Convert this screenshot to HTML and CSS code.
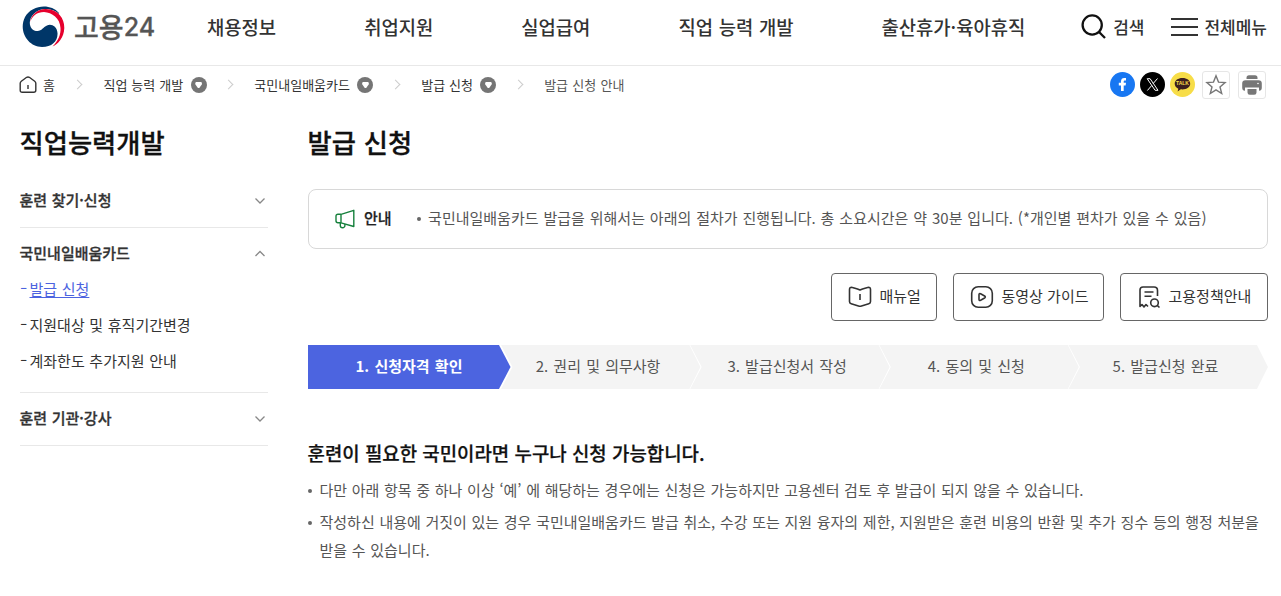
FILE: index.html
```html
<!DOCTYPE html>
<html lang="ko">
<head>
<meta charset="utf-8">
<title>고용24 - 발급 신청</title>
<link rel="stylesheet" href="styles.css">
</head>
<body>
<header class="header">
  <a class="logo">
    <svg width="43" height="42" viewBox="0 0 43 42">
      <path d="M37 7C28-3 10-1 3 11C-4 25 6 41 20 41C30 41 36 35 35.500 27C35 20 29 17.500 25 19.500C21 21 20 25 15.500 25C10 25 7 20 8 15C9 9 15 3.500 22 3C29 2.500 34 5 37 8Z" fill="#003668"/>
      <path d="M8.300 16C9 8 17 2.500 24 3C36 3.500 42.500 12 42.300 22C42 32 36 38 30.500 40.500C36 35 39 29 38.500 22C38 12 30 6.500 22 6C15 6 10 10 8.300 16Z" fill="#e6002d"/>
    </svg>
    <span class="logo-name">고용<span class="logo-num">24</span></span>
  </a>
  <nav class="gnb"><a>채용정보</a><a>취업지원</a><a>실업급여</a><a>직업 능력 개발</a><a>출산휴가·육아휴직</a></nav>
  <div class="tools">
    <a class="tool"><svg width="26" height="26" viewBox="0 0 26 26" fill="none" stroke="#111" stroke-width="2.300"><circle cx="11.200" cy="11" r="9.600"/><path d="M17.800 17.700L24 24"/></svg>검색</a>
    <a class="tool"><svg width="27" height="20" viewBox="0 0 27 20" stroke="#333" stroke-width="2"><path d="M0 2h27M0 10h27M0 18h27"/></svg>전체메뉴</a>
  </div>
</header>

<div class="pathbar">
  <div class="crumbs">
    <svg width="18" height="18" viewBox="0 0 18 18" fill="none" stroke="#333" stroke-width="1.400" stroke-linejoin="round"><path d="M1.200 7.300Q1.200 6 2.300 5.200L7.700 1.300Q9 .6 10.300 1.300L15.700 5.200Q16.800 6 16.800 7.300V14.300Q16.800 16.300 14.800 16.300H3.200Q1.200 16.300 1.200 14.300ZM9 9v4"/></svg>
    <span class="home">홈</span>
    <i class="sep"></i><span class="crumb">직업 능력 개발</span><i class="drop"></i>
    <i class="sep"></i><span class="crumb">국민내일배움카드</span><i class="drop"></i>
    <i class="sep"></i><span class="crumb">발급 신청</span><i class="drop"></i>
    <i class="sep"></i><span class="crumb current">발급 신청 안내</span>
  </div>
  <div class="share">
    <svg width="25" height="25" viewBox="0 0 25 25"><circle cx="12.500" cy="12.500" r="12.500" fill="#1877f2"/><path d="M11 19v-5.500H8.800v-2.700H11V9.300C11 7 12.300 5.900 14.200 5.900q.9 0 1.800.2v2.300h-1c-1 0-1.300.6-1.300 1.300v1.100H16l-.4 2.700h-1.900V19Z" fill="#fff"/></svg>
    <svg width="25" height="25" viewBox="0 0 25 25"><circle cx="12.500" cy="12.500" r="12.500" fill="#000"/><path d="M7.200 6.700h2.900l7.900 11.600h-2.900ZM17.500 6.500l-4.400 5.100M11.800 13.400L7.400 18.500" fill="none" stroke="#fff" stroke-width="1"/></svg>
    <svg width="25" height="25" viewBox="0 0 25 25"><circle cx="12.500" cy="12.500" r="12.500" fill="#f7dd48"/><path d="M12.500 6C8 6 4.700 8.400 4.700 11.800c0 2.200 1.400 4 3.600 5l-.7 2.600 3.200-2.100c5.400.6 9.400-2 9.400-5.500C20.200 8.400 17 6 12.500 6Z" fill="#3c1e1e"/><text x="12.500" y="13.400" text-anchor="middle" class="talk">TALK</text></svg>
    <span class="box star"><svg width="22" height="22" viewBox="0 0 22 22" fill="none" stroke="#777" stroke-width="1.400"><path d="M11 1.800L13.500 8.100L20.100 8.600L15 12.900L16.700 19.500L11 15.900L5.300 19.500L7 12.900L1.900 8.600L8.500 8.100Z"/></svg></span>
    <span class="box"><svg width="22" height="22" viewBox="0 0 22 22" fill="#777"><path d="M5.500 5V3.700Q5.500 1.200 8 1.200h6q2.500 0 2.500 2.500V5ZM4.500 6.200h13q3.300 0 3.300 3.300v4.300q0 3-2.800 3V13.400H4v3.400Q1.200 16.800 1.200 13.800V9.500Q1.200 6.200 4.500 6.200ZM6.500 15h9v3.500q0 2.300-2.300 2.300H8.800q-2.300 0-2.300-2.300Z"/><circle cx="17" cy="9.500" r=".8" fill="#fff"/></svg></span>
  </div>
</div>

<main class="page">
  <aside class="side">
    <h2 class="title">직업능력개발</h2>
    <div class="group"><div class="group-head">훈련 찾기·신청<svg width="12" height="8" viewBox="0 0 12 8"><path d="M1.500 1.500L6 6L10.500 1.500"/></svg></div></div>
    <div class="group open">
      <div class="group-head">국민내일배움카드<svg width="12" height="8" viewBox="0 0 12 8"><path d="M1.500 6L6 1.500L10.500 6"/></svg></div>
      <ul class="sub"><li class="on"><a>발급 신청</a></li><li><a>지원대상 및 휴직기간변경</a></li><li><a>계좌한도 추가지원 안내</a></li></ul>
    </div>
    <div class="group"><div class="group-head">훈련 기관·강사<svg width="12" height="8" viewBox="0 0 12 8"><path d="M1.500 1.500L6 6L10.500 1.500"/></svg></div></div>
  </aside>

  <section class="content">
    <h1 class="title">발급 신청</h1>
    <div class="notice">
      <svg width="20" height="20" viewBox="0 0 20 20" fill="none" stroke="#16803c" stroke-width="1.400" stroke-linejoin="round"><path d="M6 5.300L18.800 1.300V17.500L6 13.800ZM6 5.300H3Q1 5.300 1 7.300V11.800Q1 13.800 3 13.800H6"/><path d="M5.300 14v2.500a2.300 2.300 0 0 0 4.600 0v-1.500"/></svg>
      <strong>안내</strong>
      <span class="dot notice-text">국민내일배움카드 발급을 위해서는 아래의 절차가 진행됩니다. 총 소요시간은 약 30분 입니다. (*개인별 편차가 있을 수 있음)</span>
    </div>
    <div class="buttons">
      <a class="btn manual"><svg width="24" height="24" viewBox="0 0 24 24"><path d="M1.500 4.500Q1.500 1.900 4.300 2.500L7 3.200Q9.500 3.800 12 5Q14.500 3.800 17 3.200L19.700 2.500Q22.500 1.900 22.500 4.500V16.500Q22.500 18.200 20.800 18.700L13.500 21Q12 21.500 10.500 21L3.200 18.700Q1.500 18.200 1.500 16.500ZM12 9v6"/></svg>매뉴얼</a>
      <a class="btn video"><svg width="24" height="24" viewBox="0 0 24 24"><rect x="1.700" y="1.700" width="20.600" height="20.600" rx="6.500"/><path d="M9 9.800Q9 8 10.600 8.800L14.600 11Q16 12 14.600 13L10.600 15.200Q9 16 9 14.200Z"/></svg>동영상 가이드</a>
      <a class="btn policy"><svg width="24" height="24" viewBox="0 0 24 24"><path d="M20.500 11V5.500Q20.500 2 17 2H6Q3 2 3 5V21.500L5 19.500L7 22L9 19.500L11 21.500M7.500 7h9M7.500 11.200h7"/><circle cx="17.500" cy="17.800" r="3.800"/><path d="M20.200 20.300L22.500 22.500"/></svg>고용정책안내</a>
    </div>
    <ol class="steps"><li class="active">1. 신청자격 확인</li><li>2. 권리 및 의무사항</li><li>3. 발급신청서 작성</li><li>4. 동의 및 신청</li><li>5. 발급신청 완료</li></ol>
    <h3 class="lead">훈련이 필요한 국민이라면 누구나 신청 가능합니다.</h3>
    <ul class="notes">
      <li class="dot">다만 아래 항목 중 하나 이상 ‘예’ 에 해당하는 경우에는 신청은 가능하지만 고용센터 검토 후 발급이 되지 않을 수 있습니다.</li>
      <li class="dot">작성하신 내용에 거짓이 있는 경우 국민내일배움카드 발급 취소, 수강 또는 지원 융자의 제한, 지원받은 훈련 비용의 반환 및 추가 징수 등의 행정 처분을<br>받을 수 있습니다.</li>
    </ul>
  </section>
</main>
</body>
</html>
```
FILE: styles.css
```css
* { box-sizing: border-box; }
body { margin: 0; height: 596px; overflow: hidden; background: #fff; color: #333; font-family: "Noto Sans CJK KR", sans-serif; font-size: 15px; line-height: 28px; word-spacing: .45px; white-space: nowrap; }
h1, h2, h3, ul, ol { margin: 0; padding: 0; list-style: none; }
svg { flex: none; display: block; }

.header { display: flex; height: 66px; border-bottom: 1px solid #e8e8e8; padding: 0 14px 11px 22px; align-items: center; }
.logo { display: flex; align-items: center; width: 185px; gap: 9px; }
.logo-name { display: flex; align-items: center; font-size: 27px; font-weight: 500; color: #555; -webkit-text-stroke: .3px; }
.logo-num { font-family: Inter, sans-serif; font-size: 25px; font-weight: 500; }
.gnb { display: flex; gap: 88px; font-size: 18.800px; font-weight: 500; margin-top: -1px; }
.tools { display: flex; margin-left: auto; gap: 27px; font-size: 17px; font-weight: 500; }
.tool { display: flex; align-items: center; gap: 6px; }

.pathbar { display: flex; justify-content: space-between; height: 37px; padding: 0 15px 0 19px; align-items: center; }
.crumbs { display: flex; align-items: center; font-size: 13px; word-spacing: .3px; }
.home { margin-left: 6px; }
.sep { width: 7px; height: 7px; border: solid #ccc; border-width: 1px 1px 0 0; transform: rotate(45deg); margin: 0 22px 0 19.500px; }
.drop + .sep { margin-left: 18.700px; }
.drop { width: 16px; height: 16px; border-radius: 50%; background: #757575; margin-left: 7.500px; display: flex; align-items: center; justify-content: center; }
.drop::after { content: ""; width: 7px; height: 6px; margin-top: 1px; background: #fff; clip-path: polygon(10% 0, 90% 0, 100% 35%, 60% 100%, 40% 100%, 0 35%); }
.current { color: #555; word-spacing: .6px; }
.share { display: flex; align-items: center; gap: 5px; }
.talk { font: bold 5px "Liberation Sans", sans-serif; fill: #f7dd48; word-spacing: 0; }
.box { width: 28px; height: 28px; border: 1px solid #e6e6e6; border-radius: 3px; display: flex; align-items: center; justify-content: center; }
.star { margin: 0 3px 0 2px; }

.page { display: flex; padding: 20px 13px 0 20px; gap: 40px; }
.side { width: 248px; flex: none; }
.content { flex: 1; min-width: 0; }
.title { font-size: 26.300px; line-height: 38px; font-weight: 500; color: #111; text-indent: -.5px; -webkit-text-stroke: .3px; }
.side .title { margin-bottom: 13px; }
.group { border-bottom: 1px solid #e8e8e8; height: 53px; padding-top: 12px; }
.side .title + .group { height: 54px; }
.group.open { height: 165px; padding-top: 11px; }
.group:last-child { padding-top: 11px; }
.group-head { display: flex; align-items: center; justify-content: space-between; padding-right: 2px; font-weight: 500; text-indent: -.5px; -webkit-text-stroke: .3px; }
.group-head svg { fill: none; stroke: #888; stroke-width: 1.300; margin-top: 2px; }
.sub { padding-top: 4px; line-height: 36px; }
.sub li { display: flex; }
.sub li::before { content: "-"; width: 9.500px; transform: translateY(-1px) scaleX(1.400); transform-origin: 0 0; }
.sub .on { color: #4c63e0; }
.sub .on a { text-decoration: underline; text-underline-offset: 2px; }

.notice { display: flex; align-items: center; height: 60px; margin-top: 28px; padding: 0 0 2px 26px; border: 1px solid #d8d8d8; border-radius: 8px; }
.notice svg { margin-top: 2px; }
.notice strong { margin: 0 25px 0 9px; font-weight: 500; color: #222; -webkit-text-stroke: .25px; }
.notice-text { word-spacing: .72px; }
.dot { display: block; color: #555; }
.dot::before { content: ""; display: inline-block; width: 4px; height: 4px; border-radius: 50%; background: #666; vertical-align: middle; margin: 0 7.500px 2px 0; }
.buttons { display: flex; justify-content: flex-end; gap: 16px; margin-top: 24px; }
.btn { display: flex; align-items: center; gap: 7.500px; height: 48px; padding: 0 0 2px 16px; border: 1px solid #666; border-radius: 4px; word-spacing: 0; }
.btn svg { fill: none; stroke: #333; stroke-width: 1.600; stroke-linejoin: round; margin-top: 2px; }
.manual { width: 106px; }
.video { width: 151px; }
.policy { width: 148px; }

.steps { display: flex; margin-top: 24px; height: 44px; line-height: 42px; word-spacing: 1px; }
.steps li { width: 201px; margin-right: -11.850px; padding-right: 4px; flex: none; text-align: center; background: #f4f4f4; color: #555; clip-path: polygon(1.500px 0, 190px 0, 201px 50%, 190px 100%, 1.500px 100%, 13px 50%); }
.steps li.active { width: 203px; margin-right: -11.500px; padding-right: 1px; background: #4c64e0; color: #fff; font-weight: 600; clip-path: polygon(0 0, 191px 0, 202.500px 50%, 191px 100%, 0 100%); }
.steps li:last-child { margin-right: 0; }
.lead { margin-top: 49px; font-size: 18.900px; line-height: 30px; font-weight: 500; color: #111; text-indent: -.5px; word-spacing: 0; -webkit-text-stroke: .25px; }
.notes { margin-top: 8px; }
.notes li { padding-left: 11.500px; margin-bottom: 4px; word-spacing: .48px; }
.notes .dot::before { margin-left: -11.500px; }
```
